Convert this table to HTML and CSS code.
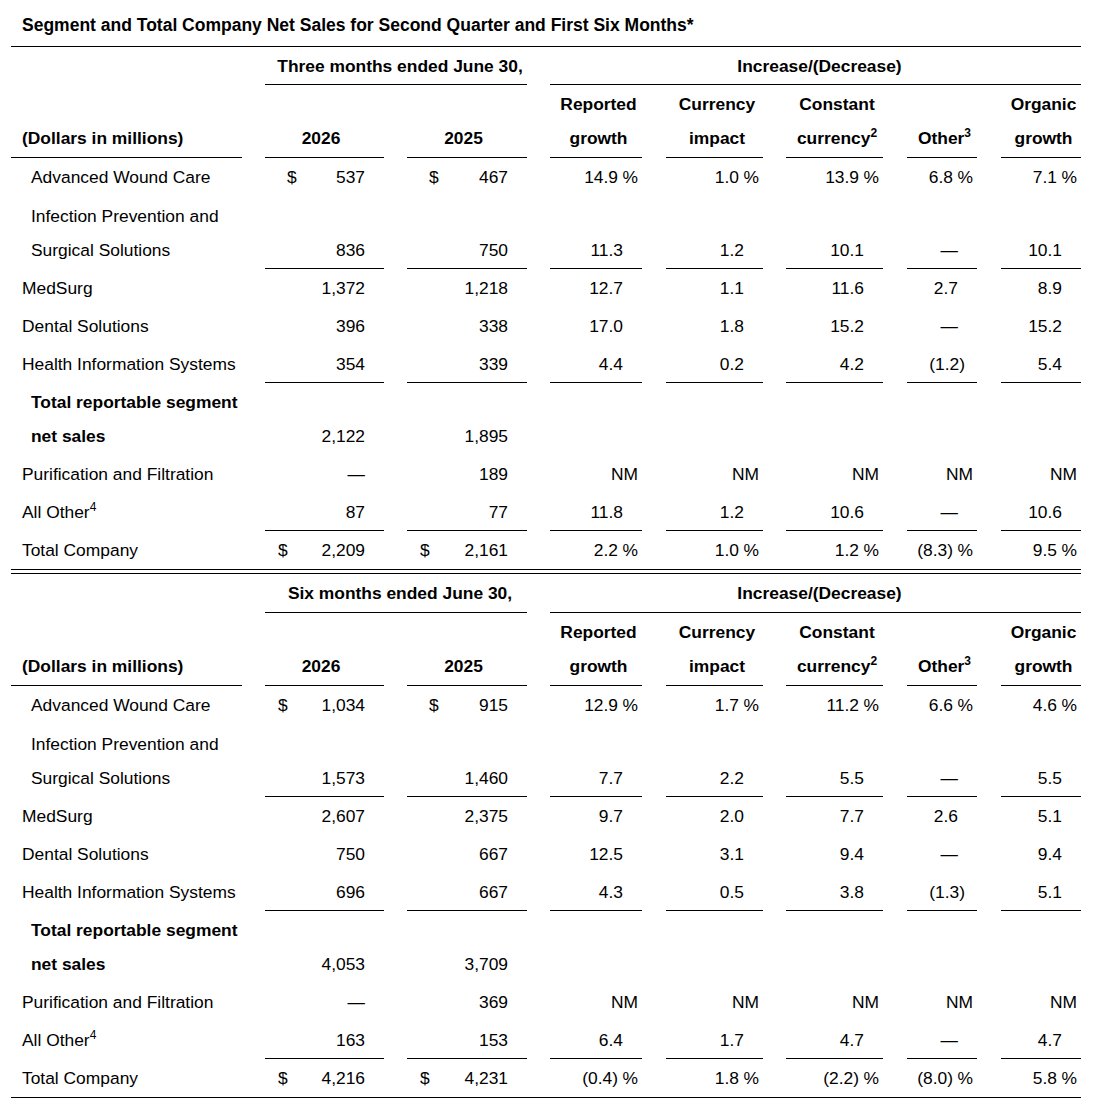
FILE: index.html
```html
<!DOCTYPE html>
<html lang="en">
<head>
<meta charset="utf-8">
<title>Segment and Total Company Net Sales</title>
<link rel="stylesheet" href="styles.css">
</head>
<body>
<div class="report">
  <div class="title">Segment and Total Company Net Sales for Second Quarter and First Six Months*</div>

  <!-- Three months -->
  <div class="row h1">
    <div></div>
    <div class="yrs hd ul">Three months ended June 30,</div>
    <div class="chg hd ul">Increase/(Decrease)</div>
  </div>
  <div class="row h2">
    <div class="lbl hd ul">(Dollars in millions)</div>
    <div class="yr hd ul">2026</div>
    <div class="yr hd ul">2025</div>
    <div class="ph hd ul">Reported<br>growth</div>
    <div class="ph hd ul">Currency<br>impact</div>
    <div class="ph hd ul">Constant<br>currency<sup>2</sup></div>
    <div class="ph hd ul">Other<sup>3</sup></div>
    <div class="ph hd ul">Organic<br>growth</div>
  </div>
  <div class="row lead">
    <div class="lbl ind">Advanced Wound Care</div>
    <div class="usd"><span>$</span><span>537</span></div>
    <div class="usd"><span>$</span><span>467</span></div>
    <div class="pct"><span>14.9</span><span class="pc">%</span></div>
    <div class="pct"><span>1.0</span><span class="pc">%</span></div>
    <div class="pct"><span>13.9</span><span class="pc">%</span></div>
    <div class="pct"><span>6.8</span><span class="pc">%</span></div>
    <div class="pct"><span>7.1</span><span class="pc">%</span></div>
  </div>
  <div class="row">
    <div class="lbl ind">Infection Prevention and<br>Surgical Solutions</div>
    <div class="amt ul">836</div>
    <div class="amt ul">750</div>
    <div class="pct ul"><span>11.3</span><span class="nx"></span></div>
    <div class="pct ul"><span>1.2</span><span class="nx"></span></div>
    <div class="pct ul"><span>10.1</span><span class="nx"></span></div>
    <div class="pct ul"><span>—</span><span class="nx"></span></div>
    <div class="pct ul"><span>10.1</span><span class="nx"></span></div>
  </div>
  <div class="row">
    <div class="lbl">MedSurg</div>
    <div class="amt">1,372</div>
    <div class="amt">1,218</div>
    <div class="pct"><span>12.7</span><span class="nx"></span></div>
    <div class="pct"><span>1.1</span><span class="nx"></span></div>
    <div class="pct"><span>11.6</span><span class="nx"></span></div>
    <div class="pct"><span>2.7</span><span class="nx"></span></div>
    <div class="pct"><span>8.9</span><span class="nx"></span></div>
  </div>
  <div class="row">
    <div class="lbl">Dental Solutions</div>
    <div class="amt">396</div>
    <div class="amt">338</div>
    <div class="pct"><span>17.0</span><span class="nx"></span></div>
    <div class="pct"><span>1.8</span><span class="nx"></span></div>
    <div class="pct"><span>15.2</span><span class="nx"></span></div>
    <div class="pct"><span>—</span><span class="nx"></span></div>
    <div class="pct"><span>15.2</span><span class="nx"></span></div>
  </div>
  <div class="row">
    <div class="lbl">Health Information Systems</div>
    <div class="amt ul">354</div>
    <div class="amt ul">339</div>
    <div class="pct ul"><span>4.4</span><span class="nx"></span></div>
    <div class="pct ul"><span>0.2</span><span class="nx"></span></div>
    <div class="pct ul"><span>4.2</span><span class="nx"></span></div>
    <div class="pct ul"><span>(1.2)</span><span class="nx neg"></span></div>
    <div class="pct ul"><span>5.4</span><span class="nx"></span></div>
  </div>
  <div class="row">
    <div class="lbl ind hd">Total reportable segment<br>net sales</div>
    <div class="amt">2,122</div>
    <div class="amt">1,895</div>
  </div>
  <div class="row">
    <div class="lbl">Purification and Filtration</div>
    <div class="amt">—</div>
    <div class="amt">189</div>
    <div class="pct"><span>NM</span></div>
    <div class="pct"><span>NM</span></div>
    <div class="pct"><span>NM</span></div>
    <div class="pct"><span>NM</span></div>
    <div class="pct"><span>NM</span></div>
  </div>
  <div class="row">
    <div class="lbl">All Other<sup>4</sup></div>
    <div class="amt ul">87</div>
    <div class="amt ul">77</div>
    <div class="pct ul"><span>11.8</span><span class="nx"></span></div>
    <div class="pct ul"><span>1.2</span><span class="nx"></span></div>
    <div class="pct ul"><span>10.6</span><span class="nx"></span></div>
    <div class="pct ul"><span>—</span><span class="nx"></span></div>
    <div class="pct ul"><span>10.6</span><span class="nx"></span></div>
  </div>
  <div class="row">
    <div class="lbl">Total Company</div>
    <div class="usd wide"><span>$</span><span>2,209</span></div>
    <div class="usd wide"><span>$</span><span>2,161</span></div>
    <div class="pct"><span>2.2</span><span class="pc">%</span></div>
    <div class="pct"><span>1.0</span><span class="pc">%</span></div>
    <div class="pct"><span>1.2</span><span class="pc">%</span></div>
    <div class="pct"><span>(8.3)</span><span class="pc">%</span></div>
    <div class="pct"><span>9.5</span><span class="pc">%</span></div>
  </div>
  <div class="dbl"></div>

  <!-- Six months -->
  <div class="row h1 lead">
    <div></div>
    <div class="yrs hd ul">Six months ended June 30,</div>
    <div class="chg hd ul">Increase/(Decrease)</div>
  </div>
  <div class="row h2">
    <div class="lbl hd ul">(Dollars in millions)</div>
    <div class="yr hd ul">2026</div>
    <div class="yr hd ul">2025</div>
    <div class="ph hd ul">Reported<br>growth</div>
    <div class="ph hd ul">Currency<br>impact</div>
    <div class="ph hd ul">Constant<br>currency<sup>2</sup></div>
    <div class="ph hd ul">Other<sup>3</sup></div>
    <div class="ph hd ul">Organic<br>growth</div>
  </div>
  <div class="row lead">
    <div class="lbl ind">Advanced Wound Care</div>
    <div class="usd wide"><span>$</span><span>1,034</span></div>
    <div class="usd"><span>$</span><span>915</span></div>
    <div class="pct"><span>12.9</span><span class="pc">%</span></div>
    <div class="pct"><span>1.7</span><span class="pc">%</span></div>
    <div class="pct"><span>11.2</span><span class="pc">%</span></div>
    <div class="pct"><span>6.6</span><span class="pc">%</span></div>
    <div class="pct"><span>4.6</span><span class="pc">%</span></div>
  </div>
  <div class="row">
    <div class="lbl ind">Infection Prevention and<br>Surgical Solutions</div>
    <div class="amt ul">1,573</div>
    <div class="amt ul">1,460</div>
    <div class="pct ul"><span>7.7</span><span class="nx"></span></div>
    <div class="pct ul"><span>2.2</span><span class="nx"></span></div>
    <div class="pct ul"><span>5.5</span><span class="nx"></span></div>
    <div class="pct ul"><span>—</span><span class="nx"></span></div>
    <div class="pct ul"><span>5.5</span><span class="nx"></span></div>
  </div>
  <div class="row">
    <div class="lbl">MedSurg</div>
    <div class="amt">2,607</div>
    <div class="amt">2,375</div>
    <div class="pct"><span>9.7</span><span class="nx"></span></div>
    <div class="pct"><span>2.0</span><span class="nx"></span></div>
    <div class="pct"><span>7.7</span><span class="nx"></span></div>
    <div class="pct"><span>2.6</span><span class="nx"></span></div>
    <div class="pct"><span>5.1</span><span class="nx"></span></div>
  </div>
  <div class="row">
    <div class="lbl">Dental Solutions</div>
    <div class="amt">750</div>
    <div class="amt">667</div>
    <div class="pct"><span>12.5</span><span class="nx"></span></div>
    <div class="pct"><span>3.1</span><span class="nx"></span></div>
    <div class="pct"><span>9.4</span><span class="nx"></span></div>
    <div class="pct"><span>—</span><span class="nx"></span></div>
    <div class="pct"><span>9.4</span><span class="nx"></span></div>
  </div>
  <div class="row">
    <div class="lbl">Health Information Systems</div>
    <div class="amt ul">696</div>
    <div class="amt ul">667</div>
    <div class="pct ul"><span>4.3</span><span class="nx"></span></div>
    <div class="pct ul"><span>0.5</span><span class="nx"></span></div>
    <div class="pct ul"><span>3.8</span><span class="nx"></span></div>
    <div class="pct ul"><span>(1.3)</span><span class="nx neg"></span></div>
    <div class="pct ul"><span>5.1</span><span class="nx"></span></div>
  </div>
  <div class="row">
    <div class="lbl ind hd">Total reportable segment<br>net sales</div>
    <div class="amt">4,053</div>
    <div class="amt">3,709</div>
  </div>
  <div class="row">
    <div class="lbl">Purification and Filtration</div>
    <div class="amt">—</div>
    <div class="amt">369</div>
    <div class="pct"><span>NM</span></div>
    <div class="pct"><span>NM</span></div>
    <div class="pct"><span>NM</span></div>
    <div class="pct"><span>NM</span></div>
    <div class="pct"><span>NM</span></div>
  </div>
  <div class="row">
    <div class="lbl">All Other<sup>4</sup></div>
    <div class="amt ul">163</div>
    <div class="amt ul">153</div>
    <div class="pct ul"><span>6.4</span><span class="nx"></span></div>
    <div class="pct ul"><span>1.7</span><span class="nx"></span></div>
    <div class="pct ul"><span>4.7</span><span class="nx"></span></div>
    <div class="pct ul"><span>—</span><span class="nx"></span></div>
    <div class="pct ul"><span>4.7</span><span class="nx"></span></div>
  </div>
  <div class="row">
    <div class="lbl">Total Company</div>
    <div class="usd wide"><span>$</span><span>4,216</span></div>
    <div class="usd wide"><span>$</span><span>4,231</span></div>
    <div class="pct"><span>(0.4)</span><span class="pc">%</span></div>
    <div class="pct"><span>1.8</span><span class="pc">%</span></div>
    <div class="pct"><span>(2.2)</span><span class="pc">%</span></div>
    <div class="pct"><span>(8.0)</span><span class="pc">%</span></div>
    <div class="pct"><span>5.8</span><span class="pc">%</span></div>
  </div>
  <div class="rule"></div>
</div>
</body>
</html>
```

FILE: styles.css
```css
html, body {
  margin: 0;
  padding: 0;
  background: #fff;
}

body {
  font-family: "Liberation Sans", Arial, sans-serif;
  font-size: 17.4px;
  color: #000;
}

.report {
  margin-left: 11px;
  width: 1070px;
}

.title {
  font-size: 17.5px;
  font-weight: bold;
  line-height: 34px;
  padding: 8px 0 4px 11px;
  border-bottom: 1px solid #000;
}

.row {
  display: grid;
  grid-template-columns: 231px 23px 119px 23px 120px 23px 92px 24px 97px 23px 97px 24px 70px 24px 80px;
  align-items: end;
}

.row > * {
  padding: 2px 0 1px;
  line-height: 34px;
  border-bottom: 1px solid transparent;
  white-space: nowrap;
}

.row.lead > * {
  padding-bottom: 2px;
}

.row > :nth-child(1) { grid-column: 1; }
.row > :nth-child(2) { grid-column: 3; }
.row > :nth-child(3) { grid-column: 5; }
.row > :nth-child(4) { grid-column: 7; }
.row > :nth-child(5) { grid-column: 9; }
.row > :nth-child(6) { grid-column: 11; }
.row > :nth-child(7) { grid-column: 13; }
.row > :nth-child(8) { grid-column: 15; }

.row.h1 > .yrs {
  grid-column: 3 / 6;
  text-align: center;
  padding-left: 8px;
}

.row.h1 > .chg {
  grid-column: 7 / 16;
  text-align: center;
  padding-left: 8px;
}

.row.h2 > * {
  padding-bottom: 2px;
}

.hd {
  font-weight: bold;
}

.ul {
  border-bottom-color: #000 !important;
}

.lbl {
  padding-left: 11px !important;
}

.lbl.ind {
  padding-left: 20px !important;
}

.yr {
  text-align: center;
  padding-right: 7px !important;
}

.ph {
  text-align: center;
  padding-left: 5px !important;
}

.amt {
  text-align: right;
  padding-right: 19px !important;
}

.usd {
  display: flex;
  justify-content: space-between;
  padding-left: 22px !important;
  padding-right: 19px !important;
}

.usd.wide {
  padding-left: 13px !important;
}

.pct {
  display: flex;
  justify-content: flex-end;
  padding-right: 4px !important;
}

.pc {
  width: 20px;
  text-align: right;
}

.nx {
  width: 15px;
}

.nx.neg {
  width: 8px;
}

sup {
  font-size: 12px;
  line-height: 0;
  vertical-align: 7px;
}

.dbl {
  height: 3px;
  border-top: 1px solid #000;
  border-bottom: 1px solid #000;
}

.rule {
  border-top: 1px solid #000;
}
```
